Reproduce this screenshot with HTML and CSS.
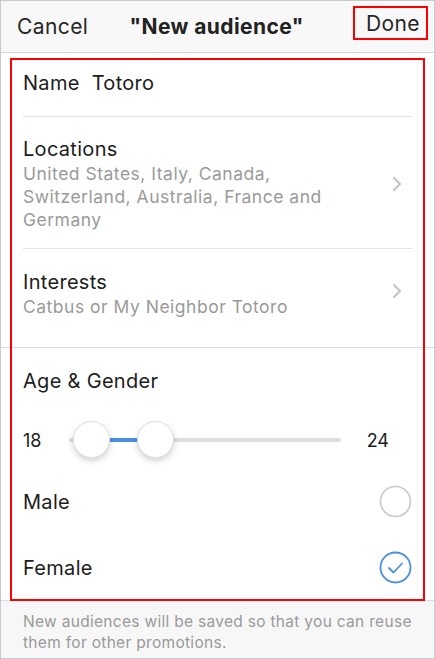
FILE: index.html
```html
<!DOCTYPE html>
<html lang="en">
  <head>
    <meta charset="utf-8">
    <link rel="stylesheet" href="styles.css">
  </head>
  <body>
    <div class="screen">
      <div class="navbar">
        <span class="nav-btn">Cancel</span>
        <span class="nav-title">"New audience"</span>
        <span class="nav-btn done">Done</span>
      </div>

      <div class="section">
        <div class="row name-row">
          <span class="label">Name</span>
          <span class="label value">Totoro</span>
        </div>
        <div class="row link-row locations">
          <div class="text">
            <div class="label">Locations</div>
            <div class="sub">United States, Italy, Canada, Switzerland, Australia, France and Germany</div>
          </div>
          <svg class="chevron" width="10" height="16" viewBox="0 0 10 16">
            <path d="M2 2 L8 8 L2 14" fill="none" stroke="#c4c4c8" stroke-width="2.2" stroke-linecap="round" stroke-linejoin="round"/>
          </svg>
        </div>
        <div class="row link-row interests">
          <div class="text">
            <div class="label">Interests</div>
            <div class="sub">Catbus or My Neighbor Totoro</div>
          </div>
          <svg class="chevron" width="10" height="16" viewBox="0 0 10 16">
            <path d="M2 2 L8 8 L2 14" fill="none" stroke="#c4c4c8" stroke-width="2.2" stroke-linecap="round" stroke-linejoin="round"/>
          </svg>
        </div>
      </div>

      <div class="section age">
        <div class="label age-title">Age &amp; Gender</div>
        <div class="slider-row">
          <span class="num">18</span>
          <div class="track">
            <div class="track-fill"></div>
            <div class="thumb thumb-min"></div>
            <div class="thumb thumb-max"></div>
          </div>
          <span class="num">24</span>
        </div>
        <div class="check-row">
          <span class="label">Male</span>
          <svg width="33" height="33" viewBox="0 0 33 33">
            <circle cx="16.5" cy="16.5" r="15" fill="none" stroke="#c9c9c9" stroke-width="1.6"/>
          </svg>
        </div>
        <div class="check-row female">
          <span class="label">Female</span>
          <svg width="33" height="33" viewBox="0 0 33 33">
            <circle cx="16.5" cy="16.5" r="15" fill="none" stroke="#4a90e2" stroke-width="1.8"/>
            <path d="M10 17 L14.5 21.5 L23 12.5" fill="none" stroke="#4a90e2" stroke-width="1.8" stroke-linecap="round" stroke-linejoin="round"/>
          </svg>
        </div>
      </div>

      <div class="footer">New audiences will be saved so that you can reuse them for other promotions.</div>

      <div class="highlight"></div>
    </div>
  </body>
</html>
```

FILE: styles.css
```css
html, body { margin: 0; padding: 0; }
body { font-family: Inter, "Liberation Sans", Arial, sans-serif; color: #1c1c1c; }
.screen {
  position: relative; box-sizing: border-box;
  width: 435px; height: 659px; overflow: hidden;
  border: 1px solid #c9c9c9; background: #f7f7f7;
}
.navbar {
  height: 51px; display: flex; align-items: center;
  justify-content: space-between; padding: 0 6px 0 16px;
  border-bottom: 1px solid #d6d6d6; background: #f8f8f8;
}
.nav-btn { font-size: 21px; color: #262626; letter-spacing: 0.4px; }
.nav-title { font-size: 21px; font-weight: 700; color: #222; letter-spacing: 0.4px; margin-right: 8px; }
.done {
  border: 2px solid #f00; padding: 3px 6px 2px 11px;
  margin-top: -8px;
}

.section { background: #fff; padding: 0 22px; border-bottom: 1px solid #dcdcdc; }
.row { display: flex; align-items: center; border-bottom: 1px solid #e2e2e2; }
.row:last-child { border-bottom: none; }
.name-row { height: 60px; padding-bottom: 3px; }
.name-row .value { margin-left: 12px; }
.label { font-size: 20px; line-height: 24px; color: #1c1c1c; letter-spacing: 0.3px; }
.link-row { justify-content: space-between; }
.link-row .text { width: 340px; }
.sub { font-size: 17.5px; line-height: 23px; color: #9a9a9a; margin-top: 1px; letter-spacing: 0.5px; }
.locations { padding: 20px 0 17px; }
.interests { padding: 21px 0 29px; }
.chevron { margin-right: 10px; }
.interests .chevron { margin-top: -6px; }

.age { padding-top: 21px; }
.slider-row { display: flex; align-items: center; margin-top: 26px; height: 42px; }
.num { font-size: 18px; width: 46px; }
.num:last-child { width: auto; margin-left: 26px; margin-right: 23px; }
.track { position: relative; flex: 1; height: 4px; border-radius: 2px; background: #dcdde1; }
.track-fill { position: absolute; left: 22px; width: 65px; top: 0; height: 4px; background: #4a90e2; }
.thumb {
  position: absolute; top: -17px; width: 37px; height: 37px; border-radius: 50%;
  background: #fff; border: 1px solid #e0e0e0; box-sizing: border-box;
  box-shadow: 0 3px 6px rgba(0, 0, 0, 0.18);
}
.thumb-min { left: 4px; }
.thumb-max { left: 68px; }
.check-row { display: flex; align-items: center; justify-content: space-between; height: 33px; margin-top: 24px; }
.female { margin-top: 33px; margin-bottom: 16px; }

.footer {
  padding: 10px 22px 0; font-size: 15.5px; line-height: 21px; color: #9a9a9a; letter-spacing: 0.3px;
}

.highlight {
  position: absolute; left: 9px; top: 57px; width: 411px; height: 539px;
  border: 2px solid #f00; pointer-events: none;
}
```
